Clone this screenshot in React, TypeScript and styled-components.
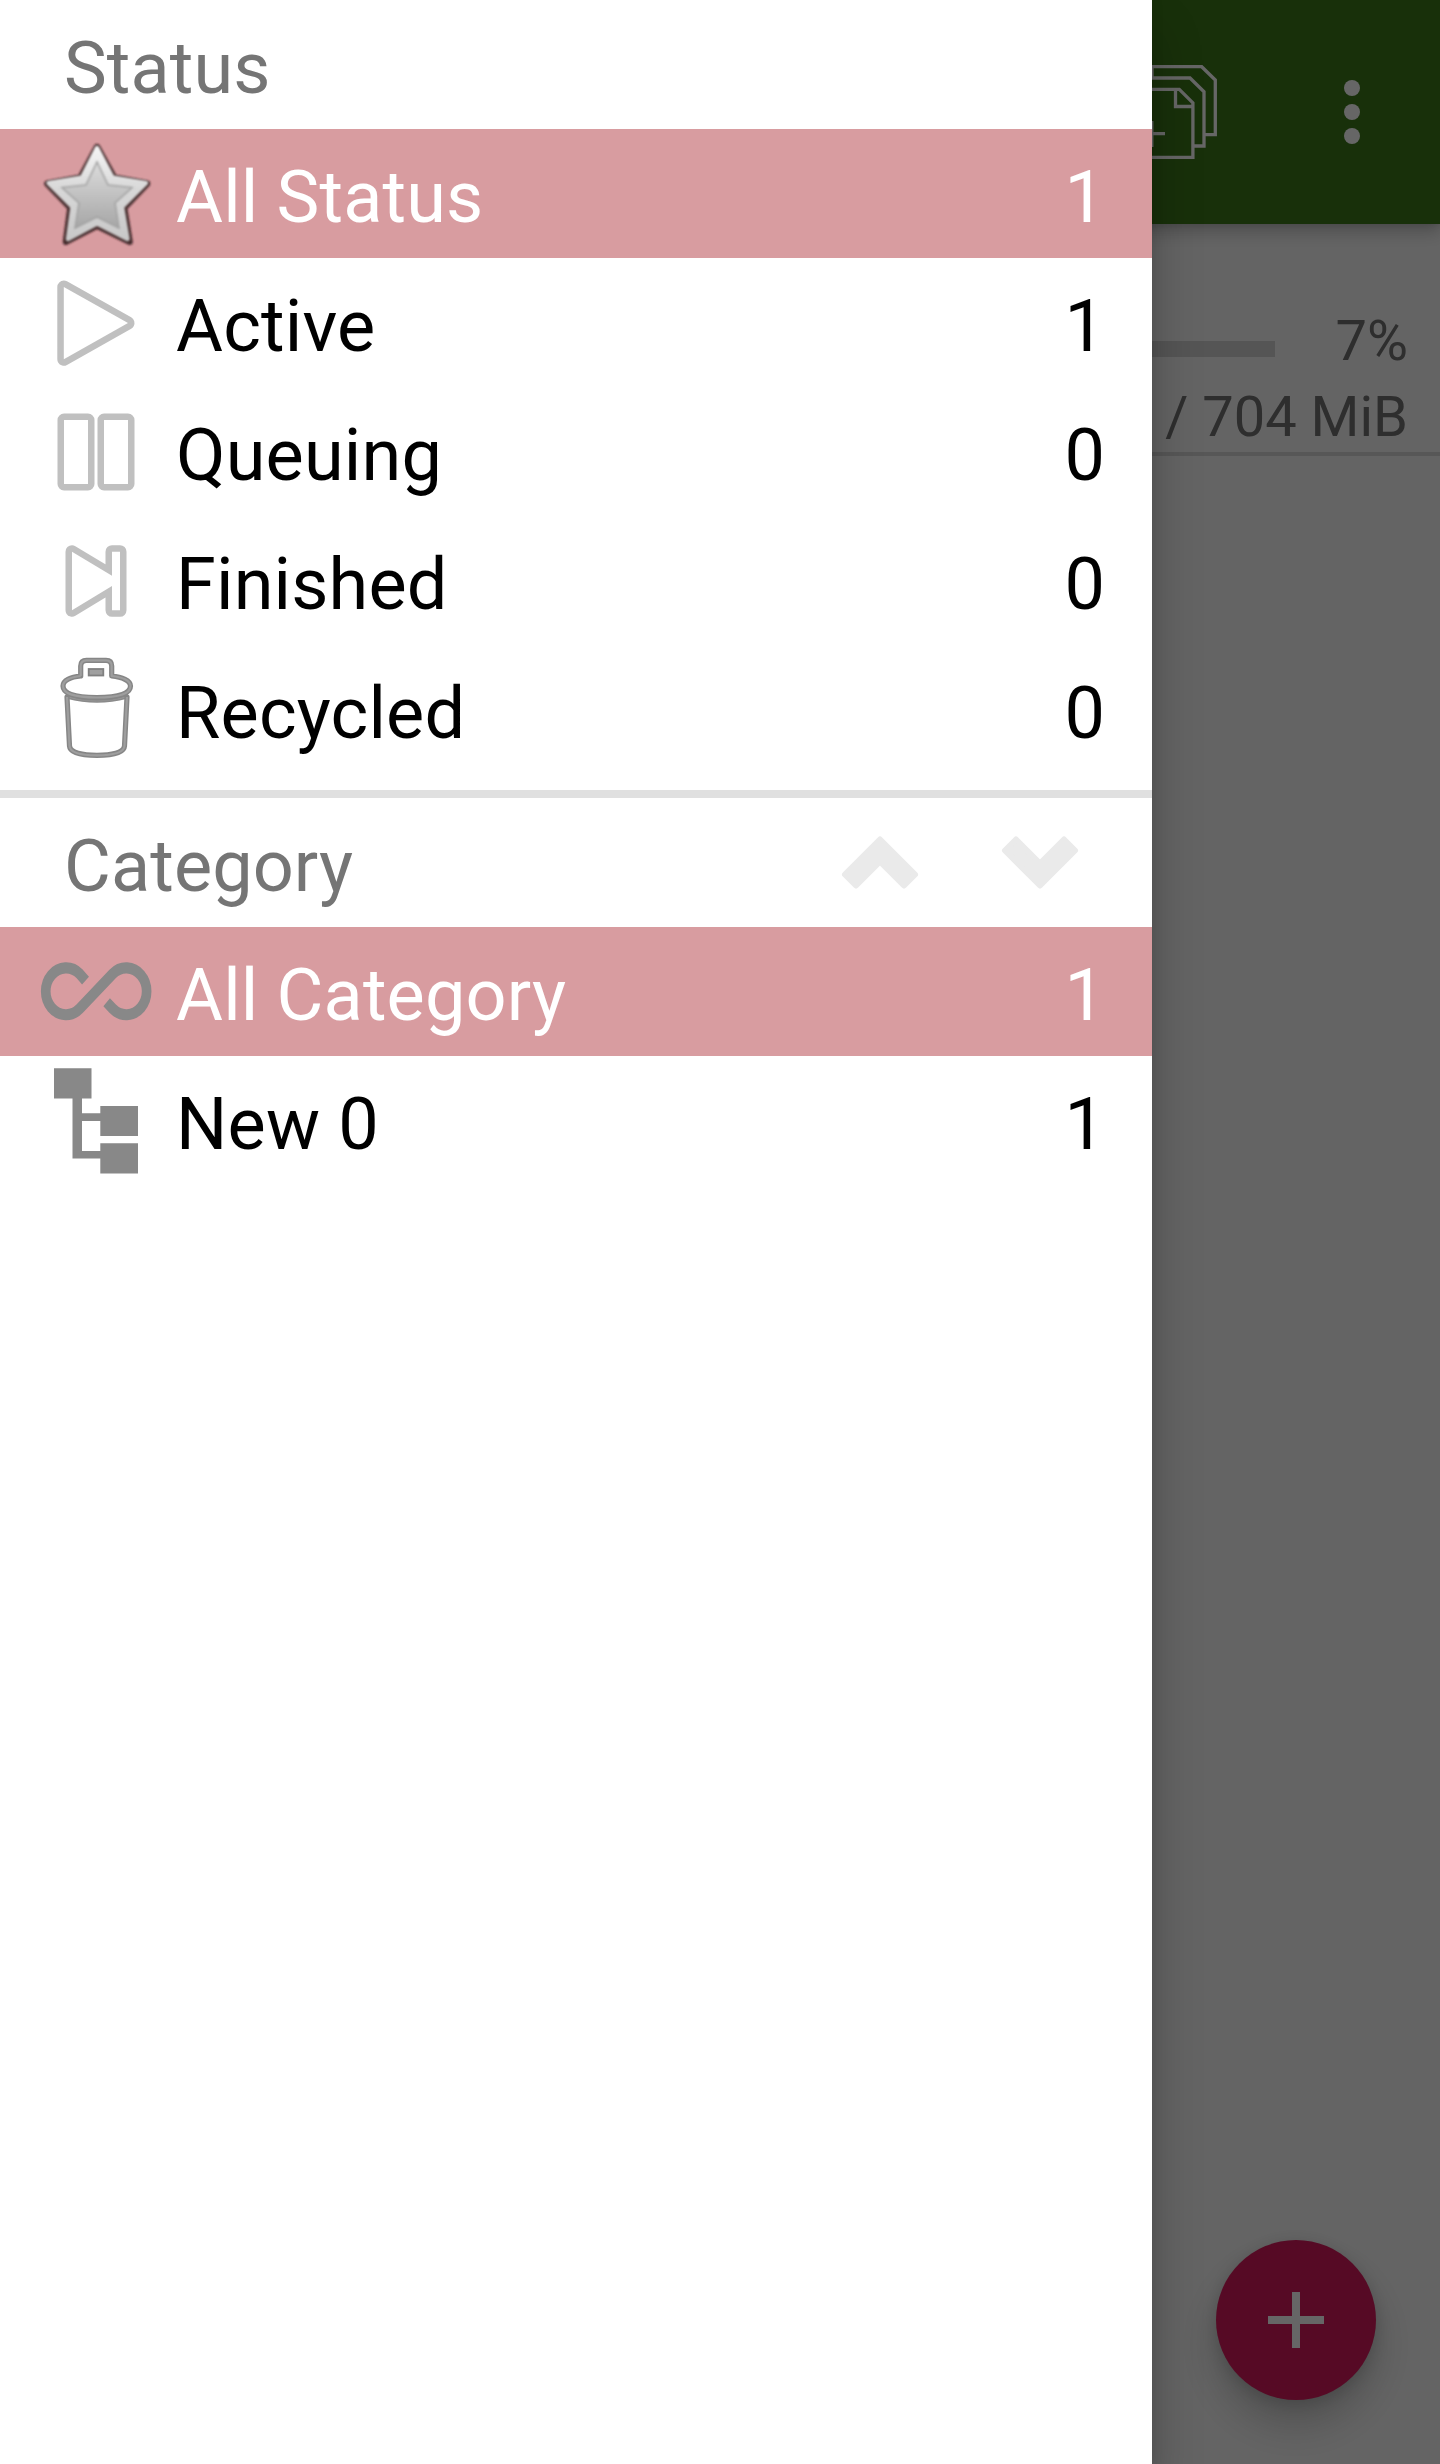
import React from 'react';
import styled, { createGlobalStyle } from 'styled-components';

const GlobalStyle = createGlobalStyle`
  * { box-sizing: border-box; }
  body { margin: 0; font-family: Roboto, 'Noto Sans', sans-serif; }
`;

const Screen = styled.div`
  position: relative;
  width: 1440px;
  height: 2464px;
  overflow: hidden;
  background: #fafafa;
`;

const AppBar = styled.header`
  position: relative;
  display: flex;
  align-items: center;
  justify-content: flex-end;
  gap: 72px;
  height: 224px;
  padding-right: 40px;
  background: #3c781b;
  box-shadow: 0 8px 16px rgba(0, 0, 0, 0.22), 0 0 8px rgba(0, 0, 0, 0.15);
`;

const Download = styled.article`
  height: 232px;
  padding: 79px 32px 0;
  border-bottom: 4px solid #dadada;
  color: #737373;
  font-size: 56px;
  line-height: 76px;
`;

const ProgressLine = styled.div`
  display: flex;
  align-items: center;
  height: 76px;
`;

const Track = styled.div`
  flex: 1;
  height: 16px;
  margin-top: 16px;
  background: #d5d5d5;
`;

const Percent = styled.span`
  width: 133px;
  text-align: right;
`;

const SizeLine = styled.div`
  text-align: right;
  white-space: nowrap;
`;

const Fab = styled.button`
  position: absolute;
  right: 64px;
  bottom: 64px;
  display: flex;
  align-items: center;
  justify-content: center;
  width: 160px;
  height: 160px;
  padding: 0;
  border: 0;
  border-radius: 50%;
  background: #d61b5d;
  box-shadow: 0 24px 40px rgba(0, 0, 0, 0.2), 0 4px 16px rgba(0, 0, 0, 0.14);
`;

const Scrim = styled.div`
  position: absolute;
  inset: 0;
  background: rgba(0, 0, 0, 0.6);
`;

const Drawer = styled.nav`
  position: absolute;
  top: 0;
  bottom: 0;
  left: 0;
  width: 1152px;
  background: #fff;
  color: #000;
  font-size: 72px;
  line-height: 84px;
  box-shadow: 0 32px 48px rgba(0, 0, 0, 0.24), 0 0 12px rgba(0, 0, 0, 0.1);
`;

const SectionHeader = styled.div`
  display: flex;
  align-items: center;
  justify-content: space-between;
  height: 129px;
  padding: 0 72px 0 64px;
  color: #757575;
`;

const Caption = styled.span`
  padding-top: 8px;
  letter-spacing: 0.1px;
`;

const Arrows = styled.div`
  display: flex;
  gap: 80px;
`;

const Row = styled.div<{ $selected?: boolean }>`
  display: flex;
  align-items: center;
  height: 129px;
  padding-right: 47px;
  background: ${(p) => (p.$selected ? '#d89ca0' : 'transparent')};
  color: ${(p) => (p.$selected ? '#fff' : '#000')};
`;

const Name = styled.span`
  flex: 1;
  padding-top: 8px;
  letter-spacing: 0.17px;
`;

const Count = styled.span`
  padding-top: 8px;
`;

const Divider = styled.hr`
  height: 8px;
  margin: 16px 0 0;
  border: 0;
  background: #e0e0e0;
`;

const RowIcon = styled.svg.attrs({ width: 176, height: 129, viewBox: '0 0 176 129', fill: 'none' })`
  display: block;
  flex: none;
`;

const STAR = 'M97 17 L114 47.5 L147 53.5 L124 77.5 L129.5 111.5 L97 95.5 L66 111.5 L70.5 77.5 L47.5 53.5 L80.5 47.5 Z';

const StarIcon = () => (
  <RowIcon>
    <defs>
      <linearGradient id="rim" x1="0" y1="0" x2="0" y2="1">
        <stop offset="0" stopColor="#f4f4f4" />
        <stop offset="0.45" stopColor="#d8d8d8" />
        <stop offset="1" stopColor="#c8c8c8" />
      </linearGradient>
      <linearGradient id="core" x1="0" y1="0" x2="0" y2="1">
        <stop offset="0" stopColor="#dcdcdc" />
        <stop offset="1" stopColor="#a6a6a6" />
      </linearGradient>
      <filter id="soft" x="-20%" y="-20%" width="140%" height="140%">
        <feGaussianBlur stdDeviation="1.3" />
      </filter>
      <filter id="softer" x="-20%" y="-20%" width="140%" height="140%">
        <feGaussianBlur stdDeviation="0.8" />
      </filter>
    </defs>
    <path d={STAR} fill="#2a1619" stroke="#2a1619" strokeWidth="6.500" strokeLinejoin="round" opacity="0.85" filter="url(#soft)" transform="translate(0 1.200)" />
    <path d="M97 19 L112.500 48.500 L146 54 L122 78 L127.500 110 L97 94.500 L68 110 L72.500 78 L48.500 54 L82 48.500 Z" fill="url(#rim)" stroke="url(#rim)" strokeWidth="4.500" strokeLinejoin="round" filter="url(#softer)" />
    <path d="M97 33 L108 56 L132 58.500 L115 74 L119 99 L97 88 L75 99 L79 74 L62 58.500 L86 56 Z" fill="url(#core)" stroke="#a2a2a2" strokeWidth="1.600" filter="url(#softer)" />
  </RowIcon>
);

const PlayIcon = () => (
  <RowIcon>
    <path d="M63.800 29 L128 65 L63.800 101.300 Z" fill="#fff" stroke="#c0c0c0" strokeWidth="13" strokeLinejoin="round" paintOrder="stroke" />
  </RowIcon>
);

const PauseIcon = () => (
  <RowIcon stroke="#c0c0c0" strokeWidth="13" strokeLinejoin="round" paintOrder="stroke">
    <path d="M64 33 H88 V97 H64 Z" fill="#fff" />
    <path d="M104 33 H128 V97 H104 Z" fill="#fff" />
  </RowIcon>
);

const NextIcon = () => (
  <RowIcon>
    <path d="M72 35.700 L112 59.700 V35.700 H120 V94.300 H112 V70 L72 94.300 Z" fill="#fff" stroke="#c0c0c0" strokeWidth="13" strokeLinejoin="round" paintOrder="stroke" />
  </RowIcon>
);

const TRASH_LINES =
  'M80.700 31 V21 Q80.700 15.300 86.500 15.300 H106 Q111.700 15.300 111.700 21 V31 C122 32 130.500 35.500 130.500 41 C130.500 48 120 52.500 96.700 52.500 C73 52.500 63 48 63 41 C63 35.500 70.500 32 80.700 31 ' +
  'M67 52 L69.500 101 C70 108 83 110.300 97 110.300 C111 110.300 124 108 124.500 101 L127 52';

const TrashIcon = () => (
  <RowIcon>
    <path d="M67 50.500 Q97 59.500 127 50.500 V53 Q97 61 67 53 Z" fill="#9a9a9a" stroke="#8a8a8a" strokeWidth="1.500" />
    <path d={TRASH_LINES} stroke="#868686" strokeWidth="5.200" strokeLinejoin="round" strokeLinecap="round" />
    <path d={TRASH_LINES} stroke="#9e9e9e" strokeWidth="2.200" strokeLinejoin="round" />
    <rect x="88.700" y="24" width="14.600" height="6.500" fill="#a0a0a0" stroke="#808080" strokeWidth="1.800" />
  </RowIcon>
);

const InfinityIcon = () => (
  <RowIcon>
    <path
      transform="scale(0.87 1)"
      d="M98.300 53.700 L91.600 46.900 A23.400 23.400 0 1 0 91.600 81.700 L129.500 46.900 A23.400 23.400 0 1 1 129.500 81.700 L122.600 75.300"
      stroke="#888"
      strokeWidth="11.100"
    />
  </RowIcon>
);

const TreeIcon = () => (
  <RowIcon>
    <path
      fill="#888"
      d="M54 12.300 H91.500 V42.500 H82 V57.300 H100.300 V50 H138 V80 H100.300 V65 H82 V95 H100.300 V87.300 H138 V117.600 H100.300 V102.500 H72.500 V42.500 H54 Z"
    />
  </RowIcon>
);

/* Rounded thick chevron, drawn pointing up in an 80px box. */
const Chevron = ({ down }: { down?: boolean }) => (
  <svg width="80" height="80" viewBox="0 0 80 80" fill="#eaeaea" stroke="#eaeaea" strokeWidth="6" strokeLinejoin="round">
    <path
      transform={down ? 'rotate(180 40 39.500)' : undefined}
      d="M40 16.500 L75 51.500 L64 62.500 L40 38.500 L16 62.500 L5 51.500 Z"
    />
  </svg>
);

const CopyIcon = () => (
  <svg width="128" height="96" viewBox="1104 64 128 96" fill="none" stroke="#fff" strokeWidth="3.300">
    <path d="M1152 78 V66.700 H1201.700 L1215.300 80 V134.700 H1205" />
    <path d="M1130 89 V78 H1190 L1204 91.700 V146 H1194" />
    <path d="M1112.500 89.300 H1179.300 L1192.900 102.900 V157.300 H1112.500 Z M1175.500 89.300 V106.500 H1193 M1151.800 121 V147 M1138.500 133.700 H1165" />
  </svg>
);

const MoreIcon = () => (
  <svg width="96" height="96" viewBox="0 0 96 96" fill="#fff">
    <circle cx="48" cy="24" r="8" />
    <circle cx="48" cy="48" r="8" />
    <circle cx="48" cy="72" r="8" />
  </svg>
);

const PlusIcon = () => (
  <svg width="56" height="56" viewBox="0 0 56 56" fill="#fff">
    <path d="M24 0 H32 V24 H56 V32 H32 V56 H24 V32 H0 V24 H24 Z" />
  </svg>
);

interface Entry {
  name: string;
  count: number;
  icon: React.ReactNode;
  selected?: boolean;
}

const statuses: Entry[] = [
  { name: 'All Status', count: 1, icon: <StarIcon />, selected: true },
  { name: 'Active', count: 1, icon: <PlayIcon /> },
  { name: 'Queuing', count: 0, icon: <PauseIcon /> },
  { name: 'Finished', count: 0, icon: <NextIcon /> },
  { name: 'Recycled', count: 0, icon: <TrashIcon /> },
];

const categories: Entry[] = [
  { name: 'All Category', count: 1, icon: <InfinityIcon />, selected: true },
  { name: 'New 0', count: 1, icon: <TreeIcon /> },
];

const EntryList = ({ entries }: { entries: Entry[] }) => (
  <>
    {entries.map((entry) => (
      <Row key={entry.name} $selected={entry.selected}>
        {entry.icon}
        <Name>{entry.name}</Name>
        <Count>{entry.count}</Count>
      </Row>
    ))}
  </>
);

export default function App() {
  return (
    <Screen>
      <GlobalStyle />
      <AppBar>
        <CopyIcon />
        <MoreIcon />
      </AppBar>
      <Download>
        <ProgressLine>
          <Track />
          <Percent>7%</Percent>
        </ProgressLine>
        <SizeLine>/ 704 MiB</SizeLine>
      </Download>
      <Fab aria-label="Add">
        <PlusIcon />
      </Fab>
      <Scrim />
      <Drawer>
        <SectionHeader>
          <Caption>Status</Caption>
        </SectionHeader>
        <EntryList entries={statuses} />
        <Divider />
        <SectionHeader>
          <Caption>Category</Caption>
          <Arrows>
            <Chevron />
            <Chevron down />
          </Arrows>
        </SectionHeader>
        <EntryList entries={categories} />
      </Drawer>
    </Screen>
  );
}
